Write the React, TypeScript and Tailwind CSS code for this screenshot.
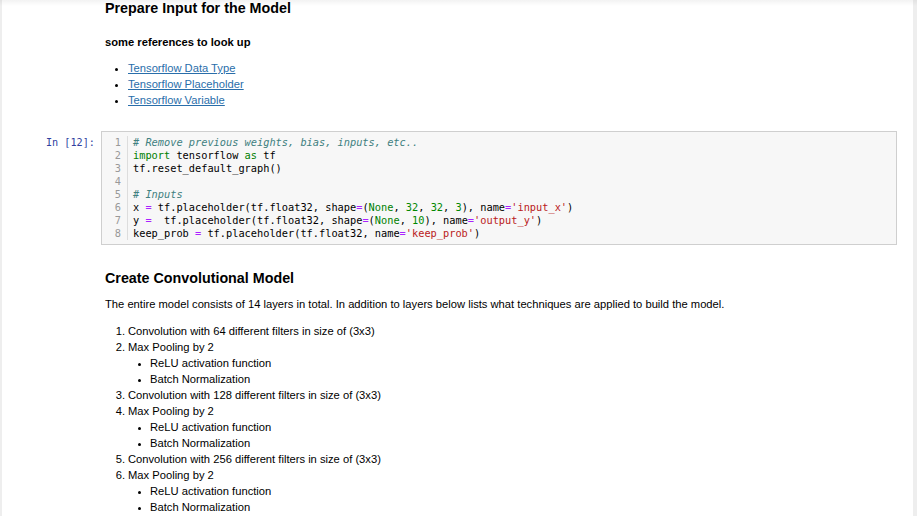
import React from "react";

const sans = { fontFamily: '"Liberation Sans", Arial, sans-serif' };
const mono = { fontFamily: '"DejaVu Sans Mono", "Liberation Mono", monospace' };

const C = ({ c, children }: { c: string; children: React.ReactNode }) => {
  const cls: Record<string, string> = {
    cm: "text-[#408080] italic",
    kw: "text-[#008000]",
    op: "text-[#aa22ff]",
    nu: "text-[#008800]",
    bi: "text-[#008000]",
    st: "text-[#ba2121]",
  };
  return <span className={cls[c]}>{children}</span>;
};

const codeLines: React.ReactNode[] = [
  <C c="cm"># Remove previous weights, bias, inputs, etc..</C>,
  <>
    <C c="kw">import</C> tensorflow <C c="kw">as</C> tf
  </>,
  <>tf.reset_default_graph()</>,
  <>{"\u00a0"}</>,
  <C c="cm"># Inputs</C>,
  <>
    x <C c="op">=</C> tf.placeholder(tf.float32, shape<C c="op">=</C>(<C c="bi">None</C>, <C c="nu">32</C>,{" "}
    <C c="nu">32</C>, <C c="nu">3</C>), name<C c="op">=</C>
    <C c="st">'input_x'</C>)
  </>,
  <>
    y <C c="op">=</C>{"  "}tf.placeholder(tf.float32, shape<C c="op">=</C>(<C c="bi">None</C>, <C c="nu">10</C>),
    name<C c="op">=</C>
    <C c="st">'output_y'</C>)
  </>,
  <>
    keep_prob <C c="op">=</C> tf.placeholder(tf.float32, name<C c="op">=</C>
    <C c="st">'keep_prob'</C>)
  </>,
];

const Bullet = () => (
  <span className="mt-[7.5px] inline-block h-[3px] w-[3px] shrink-0 rounded-full bg-black" />
);

type Item = { n: number; t: string; sub?: string[] };
const items: Item[] = [
  { n: 1, t: "Convolution with 64 different filters in size of (3x3)" },
  { n: 2, t: "Max Pooling by 2", sub: ["ReLU activation function", "Batch Normalization"] },
  { n: 3, t: "Convolution with 128 different filters in size of (3x3)" },
  { n: 4, t: "Max Pooling by 2", sub: ["ReLU activation function", "Batch Normalization"] },
  { n: 5, t: "Convolution with 256 different filters in size of (3x3)" },
  { n: 6, t: "Max Pooling by 2", sub: ["ReLU activation function", "Batch Normalization"] },
];

export default function App() {
  return (
    <div className="relative h-[516px] w-[917px] overflow-hidden bg-[#eeeeee]" style={sans}>
      <div className="ml-[2px] h-[516px] w-[911px] bg-white text-black">
        {/* Markdown cell 1 */}
        <div className="flex">
          <div className="w-[99px] shrink-0" />
          <div className="pl-[4px]">
            <h1 className="text-[14.3px] font-bold leading-[17px]">Prepare Input for the Model</h1>
            <p className="mt-[17px] text-[11.2px] font-bold leading-[16px]">some references to look up</p>
            <ul className="mt-[10px] text-[11.2px] leading-[16px]">
              {["Tensorflow Data Type", "Tensorflow Placeholder", "Tensorflow Variable"].map((t) => (
                <li key={t} className="flex">
                  <span className="flex w-[23px] shrink-0 pl-[10px]">
                    <Bullet />
                  </span>
                  <a className="text-[#296eaa] underline" href="#">
                    {t}
                  </a>
                </li>
              ))}
            </ul>
          </div>
        </div>

        {/* Code cell */}
        <div className="mt-[23px] flex">
          <div
            className="w-[99px] shrink-0 pr-[6px] pt-[5px] text-right text-[10.2px] leading-[13px] text-[#303f9f]"
            style={mono}
          >
            In [12]:
          </div>
          <div
            className="flex w-[796px] border border-[#cfcfcf] bg-[#f7f7f7] py-[4px] text-[10.3px] leading-[13px]"
            style={mono}
          >
            <div className="w-[26px] shrink-0 border-r border-[#dddddd] pr-[6px] text-right text-[#999999]">
              {codeLines.map((_, i) => (
                <div key={i}>{i + 1}</div>
              ))}
            </div>
            <div className="whitespace-pre pl-[5px] text-black">
              {codeLines.map((l, i) => (
                <div key={i}>{l}</div>
              ))}
            </div>
          </div>
        </div>

        {/* Markdown cell 2 */}
        <div className="mt-[25px] flex">
          <div className="w-[99px] shrink-0" />
          <div className="pl-[4px]">
            <h2 className="text-[14.3px] font-bold leading-[17px]">Create Convolutional Model</h2>
            <p className="mt-[9px] text-[11.2px] leading-[16px]">
              The entire model consists of 14 layers in total. In addition to layers below lists what techniques
              are applied to build the model.
            </p>
            <ol className="mt-[11px] text-[11.2px] leading-[16px]">
              {items.map((it) => (
                <li key={it.n}>
                  <div className="flex">
                    <span className="w-[23px] shrink-0 pr-[3px] text-right">{it.n}.</span>
                    <span>{it.t}</span>
                  </div>
                  {it.sub && (
                    <ul className="pl-[23px]">
                      {it.sub.map((s) => (
                        <li key={s} className="flex">
                          <span className="flex w-[22px] shrink-0 pl-[10px]">
                            <Bullet />
                          </span>
                          <span>{s}</span>
                        </li>
                      ))}
                    </ul>
                  )}
                </li>
              ))}
            </ol>
          </div>
        </div>
      </div>
      <div className="pointer-events-none absolute left-0 top-0 h-[6px] w-full bg-gradient-to-b from-black/5 to-transparent" />
    </div>
  );
}
